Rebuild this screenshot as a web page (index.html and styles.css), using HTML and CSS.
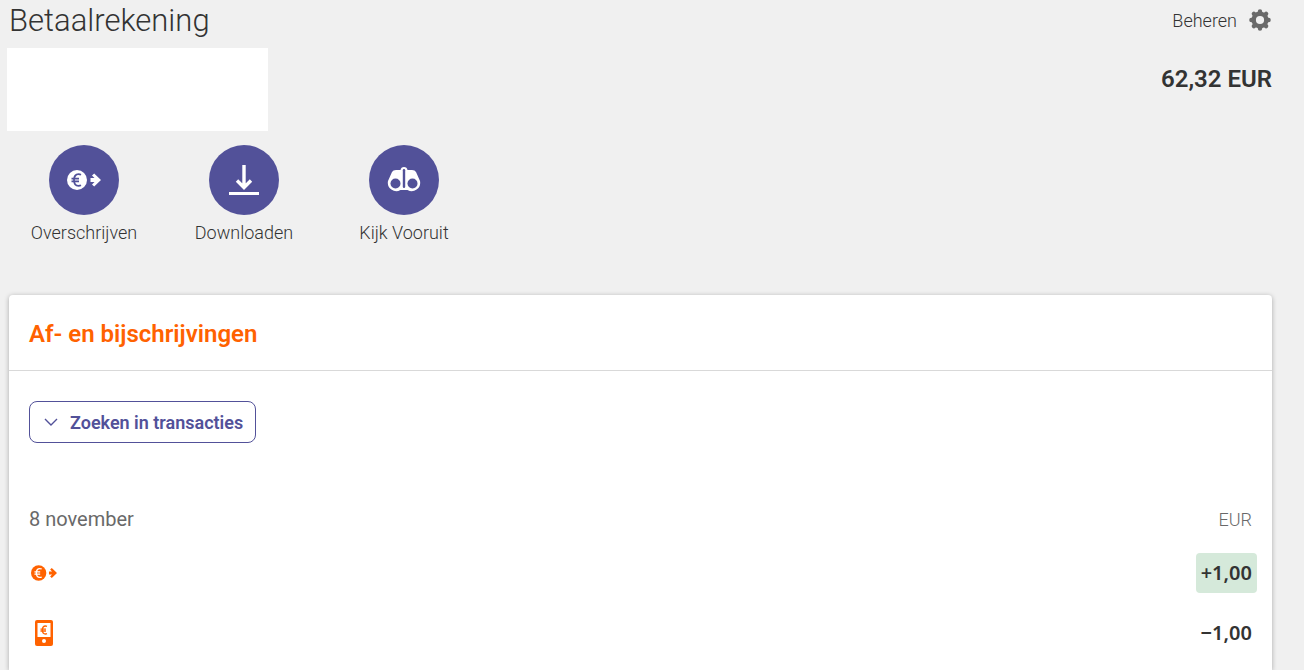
FILE: index.html
```html
<!DOCTYPE html>
<html lang="nl">
<head>
  <meta charset="UTF-8">
  <meta name="viewport" content="width=device-width, initial-scale=1">
  <title>Betaalrekening</title>
  <link rel="stylesheet" href="styles.css">
</head>
<body>
  <svg class="sprite" aria-hidden="true">
    <symbol id="transfer" viewBox="0 0 34 20">
      <circle cx="10" cy="10" r="10" fill="currentColor"/>
      <path class="cut" d="M14 4.800Q12.900 4.200 11.500 4.200C8.500 4.200 7 6.800 7 10S8.500 15.800 11.500 15.800Q12.900 15.800 14 15.200M4.500 8.600h7.500M4.500 11.400h7.500" fill="none" stroke-width="1.700"/>
      <path d="M23.500 8h4L25 5.500L27.200 3.500L34 10L27.200 16.500L25 14.500L27.500 12H23.500z" fill="currentColor"/>
    </symbol>
  </svg>

  <header class="account">
    <div class="account-top">
      <h1>Betaalrekening</h1>
      <a class="manage" href="#">
        Beheren
        <svg width="22" height="22" viewBox="0 0 22 22" aria-hidden="true">
          <circle cx="11" cy="11" r="6.300" fill="none" stroke="currentColor" stroke-width="4.400"/>
          <g stroke="currentColor" stroke-width="4.400" stroke-linecap="round">
            <path d="M11 2.400v1M11 18.600v1M2.400 11h1M18.600 11h1M4.900 4.900l.7.7M16.400 16.400l.7.7M4.900 17.100l.7-.7M16.400 5.600l.7-.7"/>
          </g>
        </svg>
      </a>
    </div>
    <div class="account-info">
      <div class="account-number"></div>
      <strong class="balance">62,32 EUR</strong>
    </div>
  </header>

  <nav class="actions">
    <a class="action" href="#">
      <span class="circle">
        <svg width="34" height="20"><use href="#transfer"/></svg>
      </span>
      Overschrijven
    </a>
    <a class="action" href="#">
      <span class="circle">
        <svg width="30" height="30" viewBox="0 0 30 30">
          <path d="M15 0v21M8 15.500l7 7l7-7" fill="none" stroke="currentColor" stroke-width="3.400"/>
          <path d="M0 27h30v3H0z" fill="currentColor"/>
        </svg>
      </span>
      Downloaden
    </a>
    <a class="action" href="#">
      <span class="circle">
        <svg width="34" height="26" viewBox="0 0 34 26">
          <path d="M5 5Q6 3 9 3h4.500Q14 0 17 0t3.500 3H25q3 0 4 2l4 9a8.500 8.500 0 0 1-12.500 9h-7A8.500 8.500 0 0 1 1 14z" fill="currentColor"/>
          <g class="cut-fill">
            <circle cx="8.500" cy="16.500" r="5"/>
            <circle cx="25.500" cy="16.500" r="5"/>
            <rect x="15.800" y="2" width="2.400" height="19" rx="1.200"/>
          </g>
        </svg>
      </span>
      Kijk Vooruit
    </a>
  </nav>

  <main class="card">
    <h2>Af- en bijschrijvingen</h2>
    <div class="card-body">
      <button class="search" type="button">
        <svg width="14" height="9" viewBox="0 0 14 9" aria-hidden="true">
          <path d="M1 1l6 6l6-6" fill="none" stroke="currentColor" stroke-width="1.400"/>
        </svg>
        Zoeken in transacties
      </button>

      <div class="day">
        <h3>8 november</h3>
        <span class="currency">EUR</span>
      </div>
      <ul class="transactions">
        <li>
          <span class="type"><svg width="26" height="16"><use href="#transfer"/></svg></span>
          <span class="amount plus">+1,00</span>
        </li>
        <li>
          <span class="type">
            <svg width="18" height="26" viewBox="0 0 18 26">
              <rect width="18" height="26" rx="2" fill="currentColor"/>
              <path d="M2.500 3h13v14H2.500z" fill="#fff"/>
              <circle cx="9" cy="21" r="2" fill="#fff"/>
              <path d="M12 6.300Q11.300 6 10.500 6C8.300 6 7.400 7.800 7.400 10S8.300 14 10.500 14Q11.300 14 12 13.700M5.500 9.100h5.500M5.500 11h5.500" fill="none" stroke="currentColor" stroke-width="1.300"/>
            </svg>
          </span>
          <span class="amount">−1,00</span>
        </li>
      </ul>
    </div>
  </main>
</body>
</html>
```

FILE: styles.css
```css
* {
  box-sizing: border-box;
}

body {
  margin: 0;
  min-height: 100vh;
  display: flex;
  flex-direction: column;
  background-color: #f0f0f0;
  color: #333;
  font-family: Roboto, "Open Sans", sans-serif;
  font-size: 18px;
}

h1, h2, h3, ul {
  margin: 0;
  padding: 0;
  font-weight: 400;
}

a {
  color: inherit;
  text-decoration: none;
}

svg {
  display: block;
}

.sprite {
  position: absolute;
  width: 0;
  height: 0;
}

.account {
  padding: 0 32px 0 7px;
}

.account-top,
.account-info,
.day,
.transactions li {
  display: flex;
  justify-content: space-between;
}

.account-top {
  height: 48px;
}

h1 {
  padding-left: 2px;
  font-size: 31px;
  font-weight: 300;
  line-height: 42px;
}

.manage {
  display: flex;
  align-items: center;
  gap: 12px;
  height: 40px;
  padding-right: 1px;
}

.manage svg {
  color: #6a6a6a;
}

.account-number {
  width: 261px;
  height: 83px;
  background-color: #fff;
}

.balance {
  padding-top: 15px;
  font-weight: 600;
  font-size: 24px;
  line-height: 32px;
}

.actions {
  display: flex;
  padding: 14px 4px 0;
}

.action {
  width: 160px;
  display: flex;
  flex-direction: column;
  align-items: center;
  gap: 6px;
  line-height: 24px;
}

.circle {
  --cut: #525199;
  width: 70px;
  height: 70px;
  display: flex;
  align-items: center;
  justify-content: center;
  border-radius: 50%;
  background-color: #525199;
  color: #fff;
}

.manage,
.action,
.currency {
  font-weight: 300;
}

.cut {
  stroke: var(--cut, #fff);
}

.cut-fill {
  fill: var(--cut);
}

.card {
  flex: 1;
  margin: 50px 32px 0 9px;
  background-color: #fff;
  border-radius: 4px 4px 0 0;
  box-shadow: 0 1px 5px rgba(0, 0, 0, 0.3);
}

h2 {
  padding: 23px 20px 20px;
  border-bottom: 1px solid #d9d9d9;
  color: #ff6200;
  font-size: 24px;
  font-weight: 600;
  line-height: 32px;
}

.card-body {
  padding: 30px 20px 0;
}

.search {
  display: flex;
  align-items: center;
  gap: 12px;
  height: 42px;
  padding: 0 12px 0 14px;
  border: 1px solid #525199;
  border-radius: 8px;
  background-color: #fff;
  color: #525199;
  font-family: inherit;
  font-size: 18px;
  font-weight: 600;
  cursor: pointer;
}

.day {
  align-items: center;
  height: 40px;
  margin-top: 56px;
  color: #696969;
}

h3 {
  font-size: 20px;
}

.transactions {
  list-style: none;
  padding-top: 4px;
}

.transactions li {
  align-items: center;
  height: 60px;
}

.type {
  width: 30px;
  display: flex;
  justify-content: center;
  color: #ff6200;
}

.amount {
  margin-right: -5px;
  padding: 0 5px;
  border-radius: 4px;
  font-family: "Noto Sans", sans-serif;
  font-size: 20px;
  font-weight: 600;
  line-height: 40px;
}

.plus {
  background-color: #d5e9da;
}
```
